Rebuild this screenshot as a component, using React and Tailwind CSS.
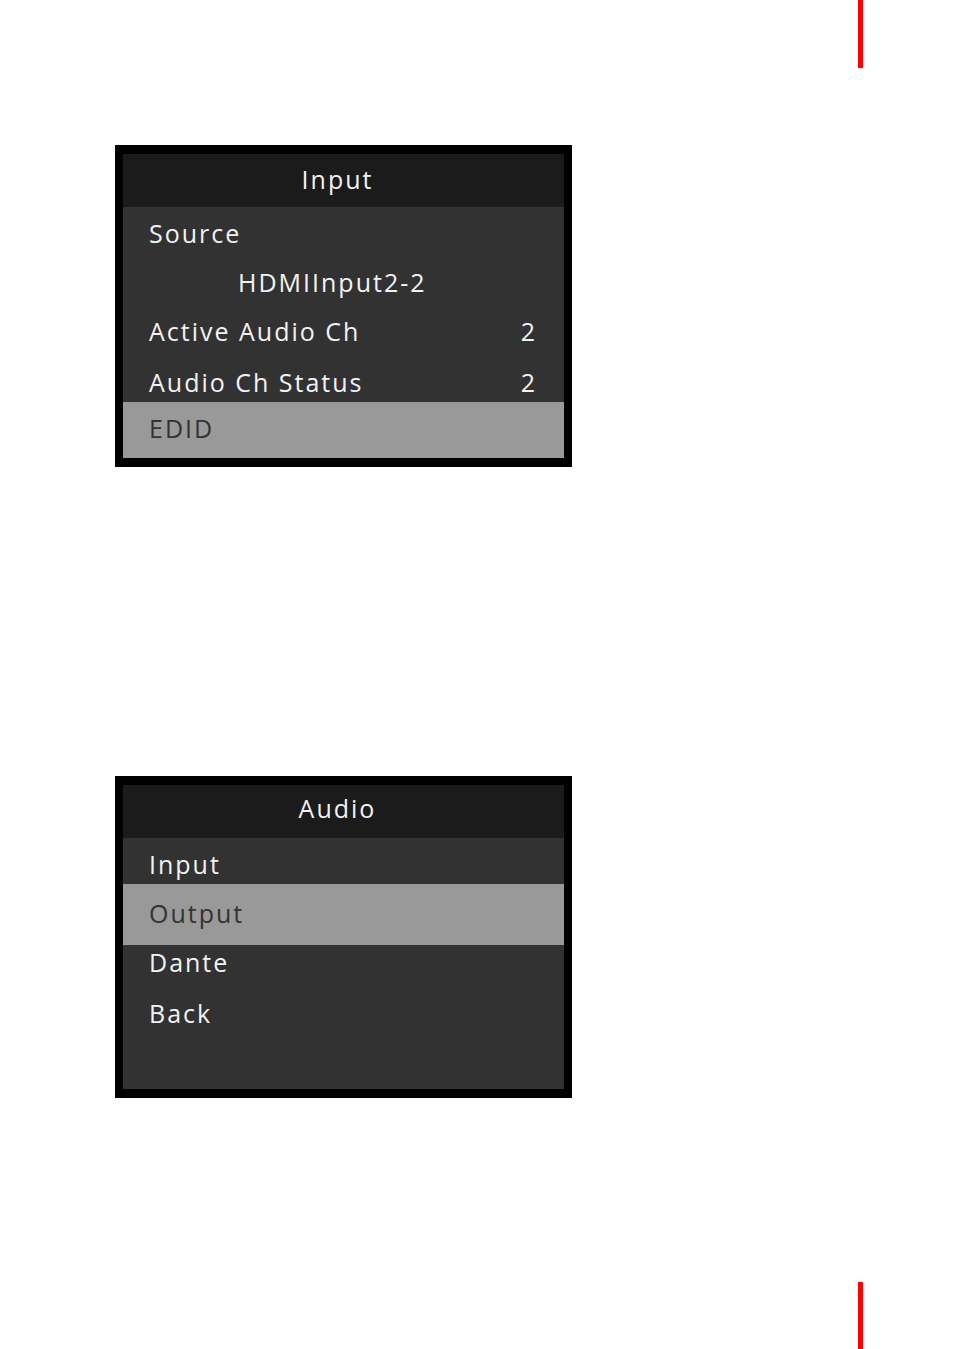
const font = { fontFamily: '"Open Sans", "Liberation Sans", sans-serif' }

function Row({ label, value, selected, className = "" }) {
  return (
    <div
      className={`flex items-start justify-between pl-[26px] pr-[27px] ${
        selected ? "bg-[#999999] text-[#333333]" : "text-[#f2f2f2]"
      } ${className}`}
    >
      <span>{label}</span>
      {value && <span>{value}</span>}
    </div>
  )
}

function Panel({ title, children, bodyClass = "", titleClass = "" }) {
  return (
    <div className="w-[457px] border-t-[9px] border-b-[9px] border-x-[8px] border-black bg-black">
      <div className="flex h-[53px] items-start justify-center bg-[#1b1b1b] pr-[12px] text-[#f2f2f2]">
        <span className={titleClass}>{title}</span>
      </div>
      <div className={`bg-[#323232] ${bodyClass}`}>{children}</div>
    </div>
  )
}

export default function App() {
  return (
    <div className="min-h-[1349px] bg-white text-[25px] leading-[34px] tracking-[2px]" style={font}>
      <div className="ml-[858px] h-[68px] w-[5px] bg-[#ff0000]" />

      <div className="ml-[115px] mt-[77px]">
        <Panel title="Input" bodyClass="h-[251px]" titleClass="pt-[8px]">
          <Row label="Source" className="h-[50px] pt-[9px]" />
          <Row
            label={<span className="pl-[89px]">HDMIInput2-2</span>}
            className="h-[49px] pt-[8px]"
          />
          <Row label="Active Audio Ch" value="2" className="h-[49px] pt-[8px]" />
          <Row label="Audio Ch Status" value="2" className="h-[47px] pt-[10px]" />
          <Row label="EDID" selected className="h-[56px] pt-[9px]" />
        </Panel>
      </div>

      <div className="ml-[115px] mt-[309px]">
        <Panel title="Audio" bodyClass="h-[251px]" titleClass="pt-[6px]">
          <Row label="Input" className="h-[46px] pt-[9px]" />
          <Row label="Output" selected className="h-[61px] pt-[12px]" />
          <Row label="Dante" className="h-[50px] pt-0" />
          <Row label="Back" className="h-[50px] pt-[1px]" />
        </Panel>
      </div>

      <div className="ml-[858px] mt-[184px] h-[68px] w-[5px] bg-[#ff0000]" />
    </div>
  )
}
